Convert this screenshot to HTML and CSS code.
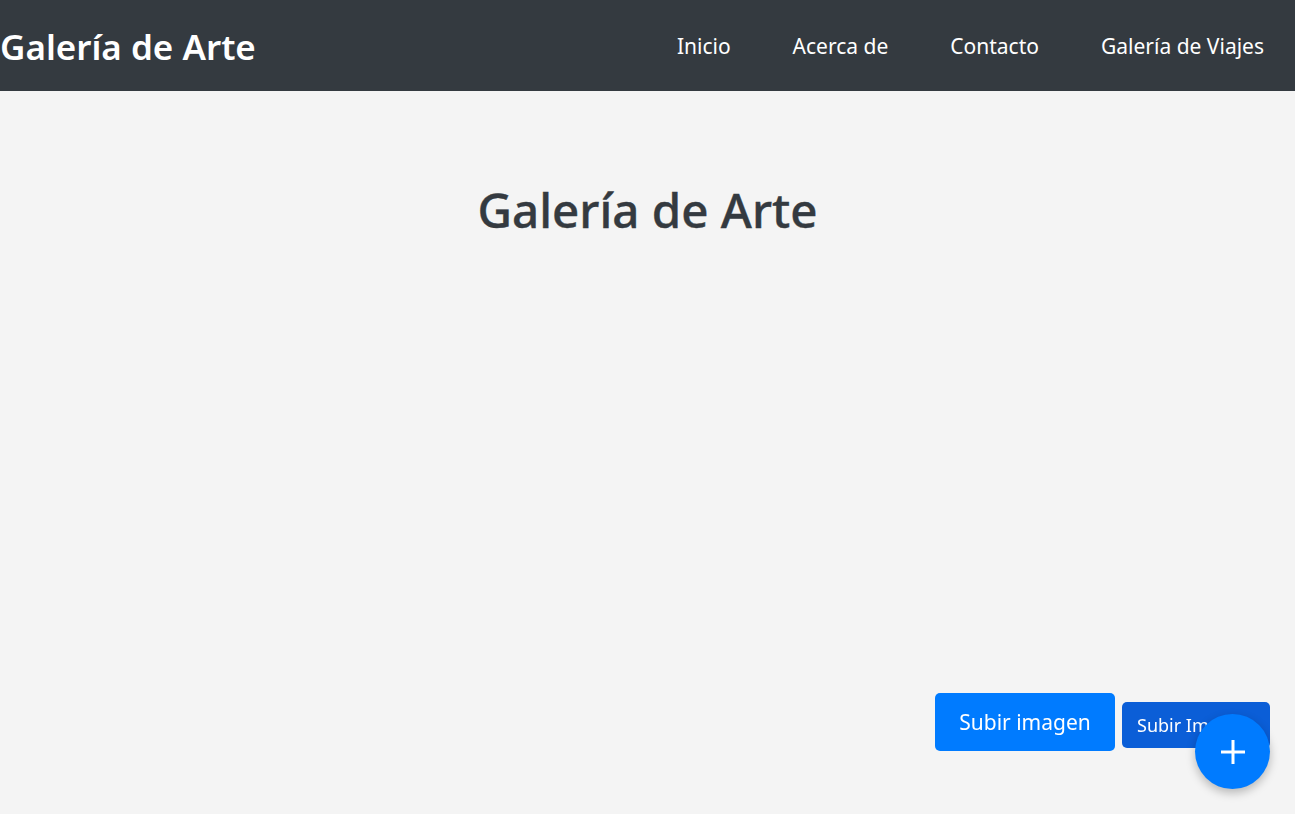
FILE: index.html
```html
<!DOCTYPE html>
<html lang="es">
<head>
<meta charset="utf-8">
<title>Galería de Arte</title>
<link rel="stylesheet" href="styles.css">
</head>
<body>
<header class="navbar">
  <a class="brand" href="#">Galería de Arte</a>
  <nav class="nav">
    <a href="#">Inicio</a>
    <a href="#">Acerca de</a>
    <a href="#">Contacto</a>
    <a href="#">Galería de Viajes</a>
  </nav>
</header>
<main class="content">
  <h1 class="title">Galería de Arte</h1>
</main>
<div class="actions">
  <button class="btn btn-primary">Subir imagen</button>
  <button class="btn btn-dark-blue">Subir Imagen</button>
</div>
<button class="fab" aria-label="Agregar">
  <svg width="28" height="28" viewBox="0 0 28 28" aria-hidden="true"><path d="M14 2v24M2 14h24" stroke="#fff" stroke-width="3" fill="none"/></svg>
</button>
</body>
</html>
```

FILE: styles.css
```css
* { box-sizing: border-box; }
html, body { margin: 0; padding: 0; }
body {
  background: #f4f4f4;
  font-family: "Noto Sans", "Open Sans", sans-serif;
  color: #343a40;
  min-height: 814px;
}
.navbar {
  height: 91px;
  background: #343a40;
  display: flex;
  align-items: center;
  justify-content: space-between;
}
.brand {
  color: #fff;
  text-decoration: none;
  font-size: 35px;
  font-weight: 600;
  padding-top: 2px;
}
.nav { display: flex; }
.nav a {
  color: #fff;
  text-decoration: none;
  font-size: 21px;
  padding: 0 31px;
}
.content { padding-top: 90px; text-align: center; }
.title {
  margin: 0;
  font-size: 47.5px;
  font-weight: 500;
  color: #343a40;
  line-height: 1.2;
  -webkit-text-stroke: 0.4px #343a40;
}
.actions {
  position: fixed;
  right: 25px;
  bottom: 63px;
  display: flex;
  align-items: flex-start;
  gap: 7px;
}
.btn {
  border: none;
  color: #fff;
  font-family: inherit;
  border-radius: 5px;
  cursor: pointer;
}
.btn-primary {
  background: #007bff;
  width: 180px;
  height: 58px;
  font-size: 21px;
}
.btn-dark-blue {
  background: #0b5ed7;
  width: 148px;
  height: 46px;
  font-size: 18px;
  margin-top: 9px;
  text-align: left;
  padding-left: 15px;
}
.fab {
  position: fixed;
  right: 25px;
  bottom: 25px;
  width: 75px;
  height: 75px;
  border-radius: 50%;
  border: none;
  background: #007bff;
  display: flex;
  align-items: center;
  justify-content: center;
  padding: 0;
  box-shadow: 0 4px 10px rgba(0,0,0,0.25);
  cursor: pointer;
}
.fab svg { display: block; }
```
